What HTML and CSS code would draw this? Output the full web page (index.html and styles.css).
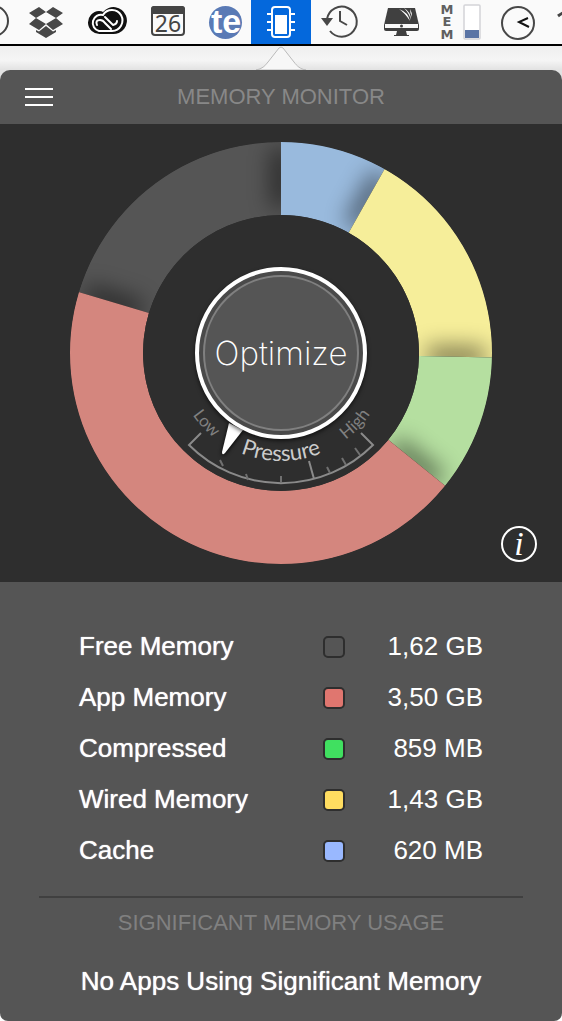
FILE: index.html
```html
<!DOCTYPE html>
<html lang="en">
<head>
  <meta charset="UTF-8" />
  <meta name="viewport" content="width=device-width, initial-scale=1.0" />
  <title>Memory Monitor</title>
  <link rel="stylesheet" href="styles.css">
</head>
<body>

<nav class="menubar" aria-label="Menu bar">
  <button type="button" class="item" aria-label="Status">
    <svg width="50" height="44" viewBox="-31 0 50 44"><circle cx="-7" cy="21" r="15" fill="none" stroke="#444" stroke-width="2"/></svg>
  </button>
  <button type="button" class="item" aria-label="Dropbox">
    <svg width="56" height="44" viewBox="19 0 56 44" fill="#484848">
      <path d="M39 7l7 5-10 6-7-5zM53 7l10 6-7 5-10-6zM36 18l10 6-7 6-10-6zM56 18l7 6-10 6-7-6zM46 26l7 5.5 3-1.5v2l-10 6-10-6v-2l3 1.500z"/>
    </svg>
  </button>
  <button type="button" class="item" aria-label="Creative Cloud">
    <svg width="63" height="44" viewBox="75 0 63 44">
      <path d="M100 34a11 11 0 0 1-1-23q3 0 4 1a13.500 13.500 0 1 1 9 22z" fill="#111"/>
      <g fill="none" stroke="#fff" stroke-width="2" stroke-linecap="round">
        <path d="M112 31H99a8 8 0 1 1 4-16A10.500 10.500 0 1 1 112 31z"/>
        <path d="M97 25q-2-5 3-5 3 0 5 3l6 6M105 17l8 8q4-1 4-4"/>
      </g>
    </svg>
  </button>
  <button type="button" class="item" aria-label="Calendar">
    <svg width="59" height="44" viewBox="138 0 59 44">
      <rect x="152" y="7" width="32" height="28" rx="3" fill="#fafafa" stroke="#444" stroke-width="2"/>
      <path d="M151 14V9a3 3 0 0 1 3-3h28a3 3 0 0 1 3 3v5z" fill="#444"/>
      <text x="168" y="32" text-anchor="middle" class="day">26</text>
    </svg>
  </button>
  <button type="button" class="item" aria-label="TextExpander">
    <svg width="54" height="44" viewBox="197 0 54 44">
      <circle cx="225.500" cy="22.500" r="16.500" fill="#5a7ab5"/>
      <text x="226" y="33" text-anchor="middle" class="te">te</text>
    </svg>
  </button>
  <button type="button" class="item active" aria-label="Memory Monitor">
    <svg width="60" height="44" viewBox="251 0 60 44">
      <path d="M267 14h5M267 22h5M267 30h5M290 14h5M290 22h5M290 30h5" stroke="#fff" stroke-width="2"/>
      <rect x="272" y="7" width="18" height="30" rx="3" fill="none" stroke="#fff" stroke-width="2"/>
      <rect x="275" y="15" width="12" height="19" fill="#fff"/>
    </svg>
  </button>
  <button type="button" class="item" aria-label="Time Machine">
    <svg width="60" height="44" viewBox="311 0 60 44">
      <path d="M327 19a15 15 0 1 1 3 12" fill="none" stroke="#484848" stroke-width="2"/>
      <path d="M321 18h12l-6 8z" fill="#484848"/>
      <path d="M340 11v10l7 4" fill="none" stroke="#484848" stroke-width="2"/>
    </svg>
  </button>
  <button type="button" class="item" aria-label="CleanMyMac">
    <svg width="58" height="44" viewBox="371 0 58 44">
      <path d="M388 8h27l4 17v4a2 2 0 0 1-2 2h-31a2 2 0 0 1-2-2v-4z" fill="#404040"/>
      <path d="M385 24h33v4h-33z" fill="#fafafa"/>
      <path d="M397 31h9l1 4h2v1h-15v-1h2z" fill="#404040"/>
      <circle cx="401.500" cy="26" r="1.500" fill="#404040"/>
      <path d="M399 9q9 3 11 12-5-8-11-12zM404 8q7 4 7 12-2-7-7-12zM410 9q2 3 2 8-2-4-2-8z" fill="#fff"/>
    </svg>
  </button>
  <button type="button" class="item" aria-label="Memory usage">
    <svg width="62" height="44" viewBox="429 0 62 44">
      <g class="mem" text-anchor="middle">
        <text x="447" y="14">M</text>
        <text x="447" y="26">E</text>
        <text x="447" y="39">M</text>
      </g>
      <rect x="464" y="5" width="16" height="34" rx="1" fill="#fff" stroke="#d4d4d8" stroke-width="1.500"/>
      <rect x="465" y="30" width="14" height="8" fill="#5a74a5"/>
    </svg>
  </button>
  <button type="button" class="item" aria-label="Clock">
    <svg width="55" height="44" viewBox="491 0 55 44" fill="none">
      <circle cx="518" cy="23" r="16" stroke="#484848" stroke-width="2"/>
      <path d="M528 18l-9 4 10 5" stroke="#111" stroke-width="2"/>
    </svg>
  </button>
  <button type="button" class="item" aria-label="Wi-Fi">
    <svg width="47" height="44" viewBox="546 0 47 44" fill="none" stroke="#444" stroke-width="3">
      <path d="M558 16q13-10 26 0M563 22q8-6 16 0"/>
    </svg>
  </button>
</nav>

<div class="notch">
  <svg width="50" height="24" viewBox="0 0 50 24">
    <path d="M0 24C6 23 9 20 12 16L23 2q2-2 4 0l11 14c3 4 6 7 12 8z" fill="#f7f7f7" stroke="#bbb"/>
  </svg>
</div>

<main class="panel">
  <header class="titlebar">
    <button type="button" class="menu" aria-label="Menu"><span></span><span></span><span></span></button>
    <h1>MEMORY MONITOR</h1>
  </header>

  <section class="chart">
    <svg class="ring" viewBox="-212 -212 424 424">
      <defs>
        <filter id="blur" filterUnits="userSpaceOnUse" x="-212" y="-212" width="424" height="424">
          <feGaussianBlur stdDeviation="11"/>
        </filter>
        <clipPath id="donut">
          <path clip-rule="evenodd" d="M-211 0a211 211 0 1 0 422 0a211 211 0 1 0-422 0zM-138 0a138 138 0 1 0 276 0a138 138 0 1 0-276 0z"/>
        </clipPath>
        <path id="scale-text" d="M-108 0A108 108 0 0 0 108 0"/>
      </defs>

      <!-- each slice paints over the shadow that it casts on the one before -->
      <g clip-path="url(#donut)">
        <path fill="#555" d="M-202.500-61.100A211.500 211.500 0 0 1 0-211.500V-138A138 138 0 0 0-132.100-39.900z"/>
        <path class="shade" d="M0-204V-146"/>
        <path class="shade" d="M-195-59L-140-42"/>
        <path fill="#99badd" d="M0-211.500A211.500 211.500 0 0 1 103.800-184.300L67.700-120.200A138 138 0 0 0 0-138z"/>
        <path class="shade" d="M100-178L72-127"/>
        <path fill="#f6ee9a" d="M103.800-184.300A211.500 211.500 0 0 1 211.500 4.400L138 2.900A138 138 0 0 0 67.700-120.200z"/>
        <path class="shade" d="M204 4L146 3"/>
        <path fill="#b5dfa0" d="M211.500 4.400A211.500 211.500 0 0 1 164.400 133.100L107.200 86.800A138 138 0 0 0 138 2.900z"/>
        <path class="shade" d="M158 128L113 92"/>
        <path fill="#d4867e" d="M164.400 133.100A211.500 211.500 0 0 1-202.500-61.100L-132.100-39.900A138 138 0 0 0 107.200 86.800z"/>
      </g>

      <g fill="none" stroke="#8a8a8a" stroke-width="2">
        <path d="M-80 80L-92 92A130 130 0 0 0 92 92L80 80"/>
        <path stroke="#707070" d="M-61 107l3 6M-35 121l2 6M0 123v6M46 114l3 6M61 105l4 7M74 95l5 7"/>
        <path d="M28 108l5 18"/>
      </g>
      <g class="scale">
        <text class="end"><textPath href="#scale-text" startOffset="66">Low</textPath></text>
        <text text-anchor="middle"><textPath href="#scale-text" startOffset="50%">Pressure</textPath></text>
        <text class="end" text-anchor="end"><textPath href="#scale-text" startOffset="274">High</textPath></text>
      </g>
      <path class="needle" d="M-52 70L-59 99q0 4 3 1L-38 77z"/>
    </svg>
    <button type="button" class="optimize"><span>Optimize</span></button>
    <button type="button" class="info" aria-label="Info">i</button>
  </section>

  <table class="stats">
    <tr><th scope="row">Free Memory</th><td><i class="swatch free"></i></td><td>1,62 GB</td></tr>
    <tr><th scope="row">App Memory</th><td><i class="swatch app"></i></td><td>3,50 GB</td></tr>
    <tr><th scope="row">Compressed</th><td><i class="swatch compressed"></i></td><td>859 MB</td></tr>
    <tr><th scope="row">Wired Memory</th><td><i class="swatch wired"></i></td><td>1,43 GB</td></tr>
    <tr><th scope="row">Cache</th><td><i class="swatch cache"></i></td><td>620 MB</td></tr>
  </table>

  <section class="usage">
    <h2>SIGNIFICANT MEMORY USAGE</h2>
    <p>No Apps Using Significant Memory</p>
  </section>
</main>

</body>
</html>
```
FILE: styles.css
```css
* { box-sizing: border-box; }
body {
  margin: 0;
  font-family: "Liberation Sans", Arial, sans-serif;
  background: #f0f0f0;
  color: #fff;
}
button {
  padding: 0;
  border: none;
  background: none;
  color: inherit;
  cursor: pointer;
}
svg { display: block; }

/* menu bar */
.menubar {
  display: flex;
  justify-content: center;
  overflow: hidden;
  background: #fafafa;
  border-bottom: 2px solid #000;
}
.item { flex: none; }
.item.active { background: #0468dc; }
.day {
  font: 23px "Noto Sans", sans-serif;
  fill: #444;
}
.te {
  font: bold 34px "Liberation Sans", sans-serif;
  fill: #fff;
}
.mem {
  font: bold 13px "DejaVu Sans", sans-serif;
  fill: #606060;
}
.notch {
  display: flex;
  justify-content: center;
  background: linear-gradient(#efefef, #f5f5f5 60%, #e2e2e2);
}

/* panel */
.panel {
  background: linear-gradient(#e2e2e2 20px, #fff 20px);
}
.titlebar {
  display: grid;
  grid-template-columns: 1fr auto 1fr;
  align-items: center;
  height: 54px;
  padding: 0 25px;
  background: #555;
  border-radius: 10px 10px 0 0;
}
.menu {
  display: grid;
  gap: 6px;
  width: 28px;
}
.menu span {
  height: 2px;
  background: #fff;
}
h1, h2 {
  margin: 0;
  font-size: 22px;
  font-weight: normal;
  line-height: 26px;
  color: #888;
}
.chart {
  position: relative;
  display: grid;
  place-items: center;
  padding: 17px;
  background: #2e2e2e;
}
.ring, .optimize { grid-area: 1 / 1; }
.ring {
  width: 100%;
  max-width: 424px;
}
.shade {
  stroke: #000;
  stroke-width: 20px;
  opacity: 0.5;
  filter: url(#blur);
}
.scale {
  font: 22px Lato, sans-serif;
  fill: #ccc;
}
.scale .end {
  font-size: 17px;
  fill: #808080;
}
.needle {
  fill: #fff;
  filter: drop-shadow(0 1px 2px #000);
}
.optimize {
  display: grid;
  width: 172px;
  height: 172px;
  padding: 4px;
  border: 4px solid #fff;
  border-radius: 50%;
  background: #4a4a4a;
  box-shadow: 0 2px 4px rgba(0, 0, 0, 0.6);
  font: 200 33px Inter, sans-serif;
}
.optimize span {
  display: grid;
  place-items: center;
  border: 2px solid #808080;
  border-radius: 50%;
  background: #555;
}
.info {
  position: absolute;
  right: 25px;
  bottom: 20px;
  width: 36px;
  height: 36px;
  border: 2px solid #fff;
  border-radius: 50%;
  font: italic 34px/30px "Liberation Serif", serif;
}

/* memory figures */
.stats {
  width: 100%;
  padding: 39px 79px 20px;
  background: #555;
  border-spacing: 0;
  font-size: 26px;
}
.stats th, .stats td {
  height: 51px;
  padding: 0;
  font-weight: normal;
  text-align: left;
  white-space: nowrap;
}
.stats td { width: 22px; }
.stats td:last-child {
  width: 138px;
  text-align: right;
}
.stats th, .usage p { text-shadow: 0 0 1px #fff; }
.swatch {
  display: block;
  width: 22px;
  height: 22px;
  border: 2px solid #2e2e2e;
  border-radius: 5px;
}
.free { background: #555; }
.app { background: #e0766f; }
.compressed { background: #40e060; }
.wired { background: #ffdd60; }
.cache { background: #99b8ff; }

.usage {
  padding: 0 39px 25px;
  background: #555;
  border-radius: 0 0 8px 8px;
  text-align: center;
}
.usage h2 {
  padding-top: 12px;
  border-top: 2px solid #404040;
  color: #808080;
}
.usage p {
  margin: 30px 0 0;
  font-size: 26px;
  line-height: 30px;
}
```
